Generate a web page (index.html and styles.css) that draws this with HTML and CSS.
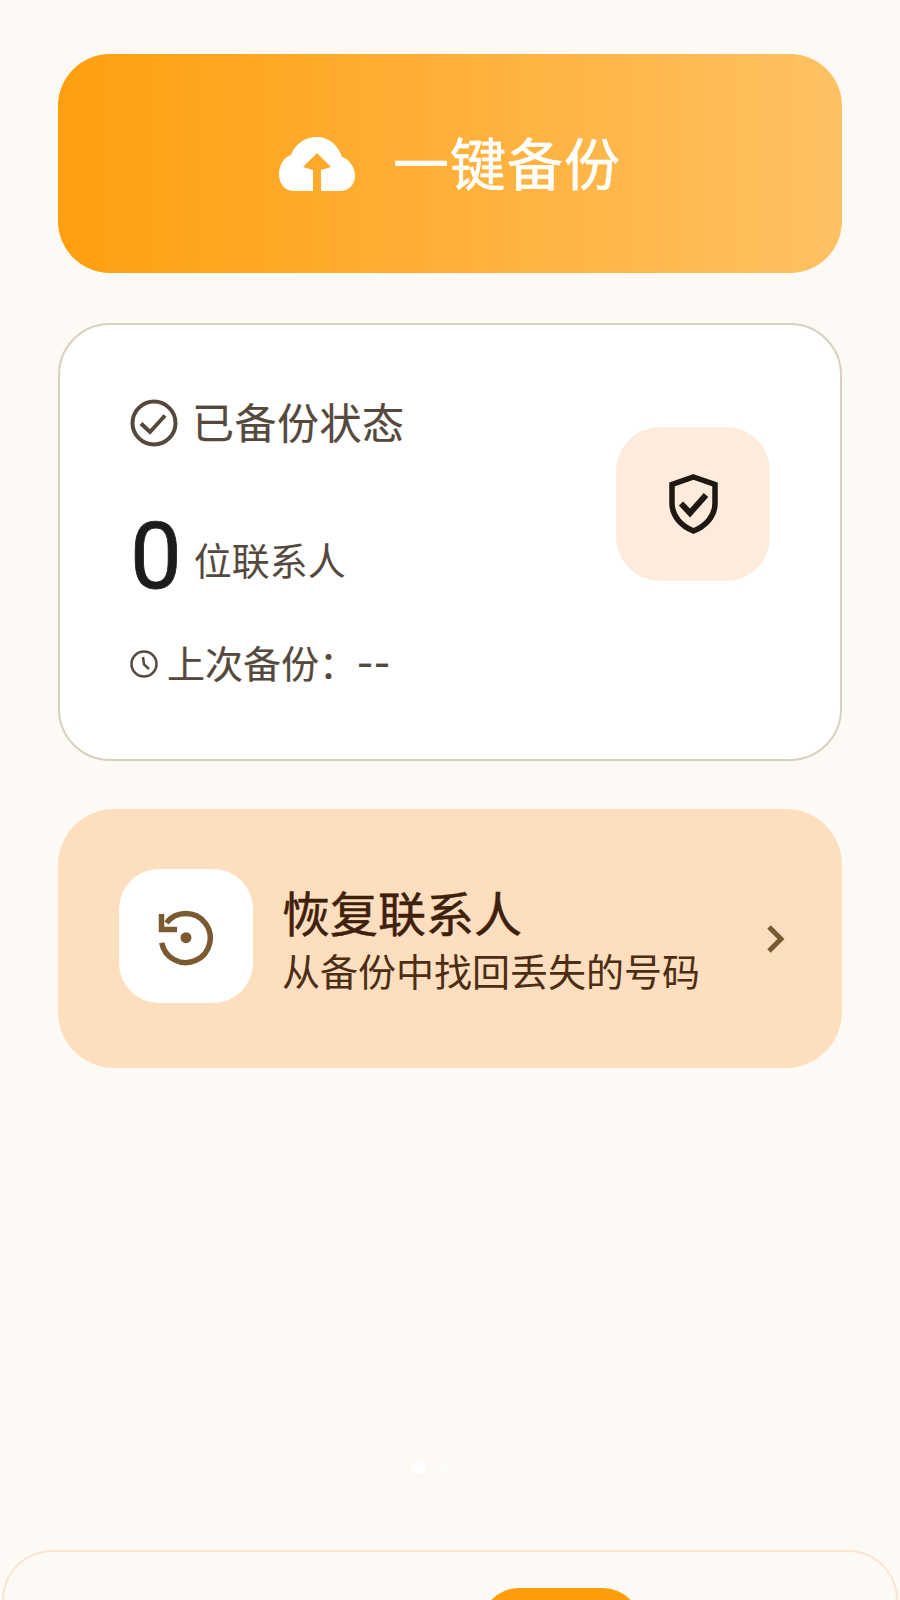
FILE: index.html
```html
<!DOCTYPE html>
<html lang="zh-CN">
<head>
  <meta charset="UTF-8" />
  <meta name="viewport" content="width=device-width, initial-scale=1.0" />
  <title>一键备份</title>
  <link rel="stylesheet" href="styles.css">
</head>
<body>
  <main class="content">
    <button class="backup-btn" type="button">
      <svg class="cloud-icon" viewBox="0 0 76 56">
        <path fill="#fff" fill-rule="evenodd" d="M15 55C6 55 0 48 0 38C0 29 5 21 12 19C16 8 26 1 38 1C50 1 59 9 63 21C70 23 76 31 76 40C76 49 69 55 61 55ZM38 17L24 31L34 34L34 55L42 55L42 34L52 31Z" />
      </svg>
      <span class="backup-label">一键备份</span>
    </button>

    <section class="status-card">
      <div class="status-info">
        <div class="status-title">
          <svg class="check-icon" viewBox="0 0 48 48">
            <circle cx="24" cy="24" r="21.5" />
            <path d="M11 24.5L20 33L35 16.5" />
          </svg>
          <span class="title-label">已备份状态</span>
        </div>
        <div class="status-count">
          <span class="count-num">0</span>
          <span class="count-unit">位联系人</span>
        </div>
        <div class="status-last">
          <svg class="clock-icon" viewBox="0 0 28 28">
            <circle cx="14" cy="14" r="12.5" />
            <path d="M13 7L14 14.5L19 19" />
          </svg>
          <span class="last-label">上次备份：<span class="last-value">--</span></span>
        </div>
      </div>
      <div class="shield-tile">
        <svg class="shield-icon" viewBox="0 0 49 60">
          <path d="M24.5 3L46 10.5V29C46 42 37 52 24.5 57C12 52 3 42 3 29V10.5Z" />
          <path class="shield-check" d="M12 29.5L21 39L37 21" />
        </svg>
      </div>
    </section>

    <section class="restore-card">
      <div class="restore-tile">
        <svg class="restore-icon" viewBox="0 0 60 60">
          <path d="M9.5 14.9A24.5 24.5 0 1 1 4.7 34.7" />
          <path d="M4.5 6V21.5H20" />
          <circle class="restore-dot" cx="29" cy="29.7" r="5.5" />
        </svg>
      </div>
      <div class="restore-text">
        <div class="restore-title">恢复联系人</div>
        <div class="restore-sub">从备份中找回丢失的号码</div>
      </div>
      <svg class="chevron" viewBox="0 0 20 30">
        <path d="M3 3L15 15L3 27" />
      </svg>
    </section>

    <div class="dots">
      <span class="dot active"></span>
      <span class="dot"></span>
      <span class="dot"></span>
    </div>
  </main>

  <nav class="bottom-nav">
    <div class="nav-pill"></div>
  </nav>
</body>
</html>
```

FILE: styles.css
```css
html, body {
  margin: 0;
  height: 1600px;
  overflow: hidden;
}

body {
  background-color: #fdfaf5;
  font-family: "Noto Sans CJK SC", "Noto Sans", sans-serif;
}

.content {
  padding: 54px 58px 0;
}

.backup-btn {
  display: flex;
  justify-content: center;
  align-items: center;
  gap: 38px;
  width: 100%;
  height: 219px;
  padding: 0;
  border: none;
  border-radius: 52px;
  background: linear-gradient(90deg, #ff9f0f, #ffc163);
  color: #fff;
  font-family: inherit;
  font-size: 56px;
  letter-spacing: 1px;
}

.backup-label {
  padding-bottom: 6px;
  -webkit-text-stroke: 0.6px #fff;
}

.cloud-icon {
  width: 76px;
  height: 56px;
}

.status-card {
  display: flex;
  justify-content: space-between;
  box-sizing: border-box;
  height: 438px;
  margin-top: 50px;
  padding: 74px 70px 0;
  border: 2px solid #d9cfbd;
  border-radius: 52px;
  background-color: #fff;
}

.status-title {
  display: flex;
  align-items: center;
  gap: 14px;
  height: 48px;
  color: #55493d;
  font-size: 42px;
  letter-spacing: 0.5px;
}

.title-label {
  padding-bottom: 6px;
  -webkit-text-stroke: 0.2px #55493d;
}

.check-icon {
  width: 48px;
  height: 48px;
  fill: none;
  stroke: #55493d;
  stroke-width: 4;
}

.status-count {
  display: flex;
  align-items: center;
  gap: 12px;
  height: 100px;
  margin-top: 60px;
}

.count-num {
  color: #1c1c1c;
  font-family: Roboto, sans-serif;
  font-size: 92px;
  line-height: 100px;
  -webkit-text-stroke: 0.8px #1c1c1c;
}

.count-unit {
  padding-top: 2px;
  color: #55493d;
  font-size: 38px;
}

.status-last {
  display: flex;
  align-items: center;
  gap: 9px;
  margin-top: 27px;
  color: #55493d;
  font-size: 38px;
}

.last-label {
  padding-bottom: 4px;
  -webkit-text-stroke: 0.2px #55493d;
}

.last-value {
  font-size: 46px;
  line-height: 1;
  letter-spacing: 1px;
}

.clock-icon {
  width: 28px;
  height: 28px;
  fill: none;
  stroke: #55493d;
  stroke-width: 2.5;
}

.shield-tile {
  display: flex;
  justify-content: center;
  align-items: center;
  width: 154px;
  height: 154px;
  margin-top: 28px;
  border-radius: 44px;
  background-color: #fdecdb;
}

.shield-icon {
  width: 49px;
  height: 60px;
  fill: none;
  stroke: #1f1712;
  stroke-width: 5.5;
}

.shield-check {
  stroke-width: 6;
}

.restore-card {
  display: flex;
  align-items: center;
  height: 259px;
  margin-top: 48px;
  padding: 0 56px 0 61px;
  border-radius: 56px;
  background-color: #fddfbf;
}

.restore-tile {
  display: flex;
  justify-content: center;
  align-items: center;
  flex-shrink: 0;
  width: 134px;
  height: 134px;
  margin-bottom: 6px;
  border-radius: 40px;
  background-color: #fff;
}

.restore-icon {
  width: 60px;
  height: 60px;
  margin: 4px 0 0 2px;
  fill: none;
  stroke: #7b5a32;
  stroke-width: 5.5;
}

.restore-dot {
  fill: #7b5a32;
  stroke: none;
}

.restore-text {
  flex: 1;
  margin-left: 29px;
}

.restore-title {
  color: #3e200b;
  font-size: 48px;
  line-height: 56px;
  -webkit-text-stroke: 0.5px #3e200b;
}

.restore-sub {
  margin-top: 6px;
  color: #4d2d13;
  font-size: 38px;
  line-height: 50px;
}

.chevron {
  width: 20px;
  height: 30px;
  fill: none;
  stroke: #7b5a32;
  stroke-width: 5;
}

.dots {
  display: flex;
  gap: 12px;
  margin-top: 392px;
  padding-left: 354px;
}

.dot {
  width: 14px;
  height: 14px;
  border-radius: 50%;
  background-color: #fdfbf7;
}

.dot.active {
  background-color: #fff;
}

.bottom-nav {
  display: flex;
  justify-content: center;
  box-sizing: border-box;
  height: 50px;
  margin: 76px 2px 0;
  padding: 36px 0 0 222px;
  border: 2px solid #f8e6d0;
  border-bottom: none;
  border-radius: 50px 50px 0 0;
  overflow: hidden;
}

.nav-pill {
  flex-shrink: 0;
  width: 160px;
  height: 100px;
  border-radius: 38px;
  background-color: #ff9d0a;
}
```
